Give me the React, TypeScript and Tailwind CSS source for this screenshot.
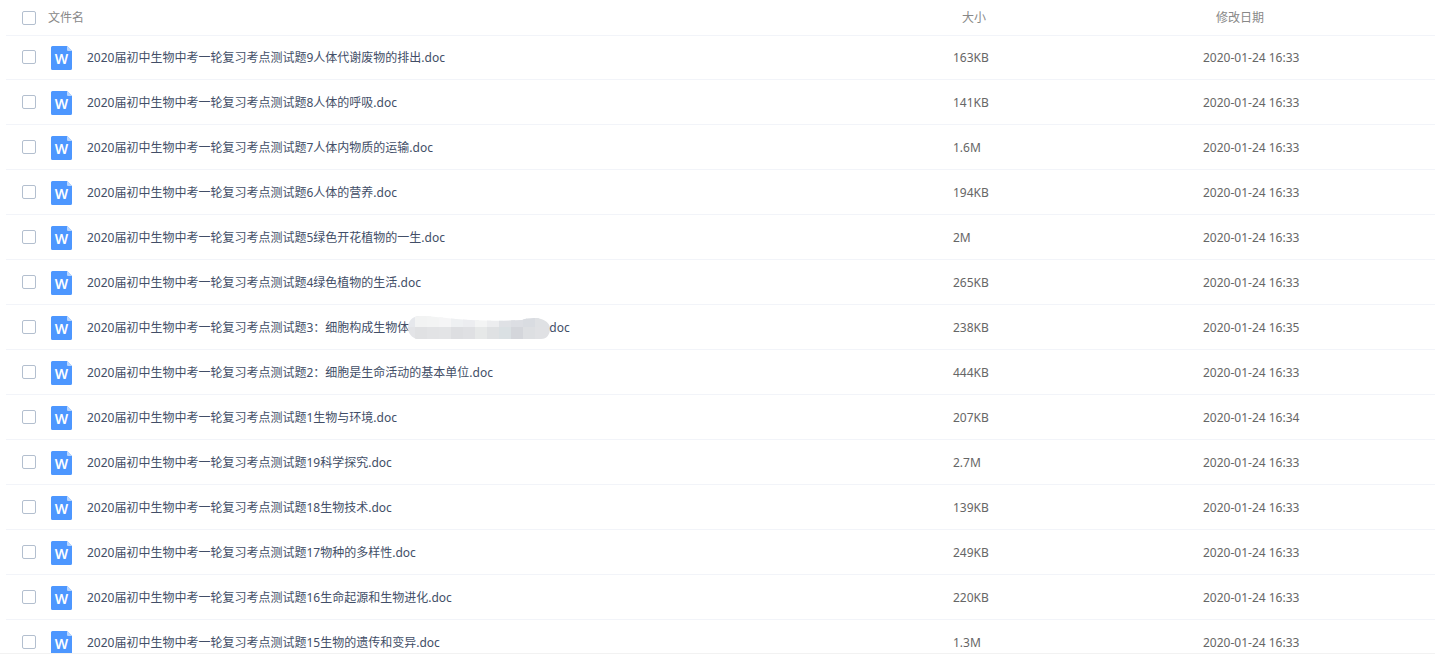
import { useState } from "react";

type FileRow = {
  name: string;
  size: string;
  date: string;
  masked?: boolean;
};

const files: FileRow[] = [
  { name: "2020届初中生物中考一轮复习考点测试题9人体代谢废物的排出.doc", size: "163KB", date: "2020-01-24 16:33" },
  { name: "2020届初中生物中考一轮复习考点测试题8人体的呼吸.doc", size: "141KB", date: "2020-01-24 16:33" },
  { name: "2020届初中生物中考一轮复习考点测试题7人体内物质的运输.doc", size: "1.6M", date: "2020-01-24 16:33" },
  { name: "2020届初中生物中考一轮复习考点测试题6人体的营养.doc", size: "194KB", date: "2020-01-24 16:33" },
  { name: "2020届初中生物中考一轮复习考点测试题5绿色开花植物的一生.doc", size: "2M", date: "2020-01-24 16:33" },
  { name: "2020届初中生物中考一轮复习考点测试题4绿色植物的生活.doc", size: "265KB", date: "2020-01-24 16:33" },
  { name: "2020届初中生物中考一轮复习考点测试题3：细胞构成生物体", size: "238KB", date: "2020-01-24 16:35", masked: true },
  { name: "2020届初中生物中考一轮复习考点测试题2：细胞是生命活动的基本单位.doc", size: "444KB", date: "2020-01-24 16:33" },
  { name: "2020届初中生物中考一轮复习考点测试题1生物与环境.doc", size: "207KB", date: "2020-01-24 16:34" },
  { name: "2020届初中生物中考一轮复习考点测试题19科学探究.doc", size: "2.7M", date: "2020-01-24 16:33" },
  { name: "2020届初中生物中考一轮复习考点测试题18生物技术.doc", size: "139KB", date: "2020-01-24 16:33" },
  { name: "2020届初中生物中考一轮复习考点测试题17物种的多样性.doc", size: "249KB", date: "2020-01-24 16:33" },
  { name: "2020届初中生物中考一轮复习考点测试题16生命起源和生物进化.doc", size: "220KB", date: "2020-01-24 16:33" },
  { name: "2020届初中生物中考一轮复习考点测试题15生物的遗传和变异.doc", size: "1.3M", date: "2020-01-24 16:33" },
];

const mosaicTop = ["#e6e8ec", "#f2f3f3", "#f3f4f4", "#f5f5f6", "#eef0f2", "#ecedf0", "#f3f4f4", "#ecedef", "#dfe1e5", "#dcdee3", "#d9dce1", "#dfe1e4"];
const mosaicBottom = ["#e3e4e7", "#e0e1e3", "#e2e3e5", "#e3e4e6", "#dddee1", "#dfe0e3", "#e6e8e8", "#dfe1e3", "#dae0e3", "#d4d6db", "#dddfe2", "#e0e1e4"];

function WordIcon() {
  return (
    <svg width="21" height="24" viewBox="0 0 21 24" className="shrink-0" aria-hidden="true">
      <path d="M1.5 0H16l5 5v17.5a1.5 1.5 0 0 1-1.5 1.5h-18A1.5 1.5 0 0 1 0 22.5v-21A1.5 1.5 0 0 1 1.5 0z" fill="#4d97ff" />
      <path d="M16 0l5 5h-4a1 1 0 0 1-1-1z" fill="#b8d6ff" />
      <text x="10.500" y="18" textAnchor="middle" className="fill-white font-['Noto_Sans',sans-serif] text-[14px] font-semibold">
        W
      </text>
    </svg>
  );
}

// Pixelated smudge over the hidden part of a file name
function Mosaic() {
  return (
    <svg width="142" height="24" viewBox="0 0 142 24" className="-mx-px shrink-0" aria-hidden="true">
      <defs>
        <clipPath id="smudge">
          <path d="M12 0C26 0 34 2 48 3c22 2 44 2 66 1 4-2 14-3 19-1 6 2 9 5 9 10s-3 10-9 10H9c-5-1-9-6-9-11C0 5 4 0 12 0z" />
        </clipPath>
      </defs>
      <g clipPath="url(#smudge)" shapeRendering="crispEdges">
        {mosaicTop.map((color, i) => (
          <rect key={i} x={i * 12 - 5} y="0" width="16" height="11" fill={color} />
        ))}
        {mosaicBottom.map((color, i) => (
          <rect key={i} x={i * 12 - 5} y="11" width="16" height="13" fill={color} />
        ))}
      </g>
    </svg>
  );
}

function Checkbox({ id, label, checked, onChange }: { id: string; label: string; checked: boolean; onChange: () => void }) {
  return (
    <input
      type="checkbox"
      id={id}
      aria-label={label}
      checked={checked}
      onChange={onChange}
      className="block size-3.5 cursor-pointer appearance-none rounded-xs border border-[#b3bfcf] bg-white checked:border-[#4d97ff] checked:bg-[#4d97ff]"
    />
  );
}

export default function App() {
  const [selected, setSelected] = useState<number[]>([]);
  const allSelected = selected.length === files.length;

  const toggle = (index: number) => {
    setSelected((prev) => (prev.includes(index) ? prev.filter((i) => i !== index) : [...prev, index]));
  };

  return (
    <div className="h-screen overflow-hidden border-b border-[#f2f2f2] bg-white pl-1.5 font-['Noto_Sans','Noto_Sans_CJK_SC',sans-serif] text-xs">
      <table className="w-full table-fixed border-separate border-spacing-0 text-left">
        <colgroup>
          <col className="w-[42px]" />
          <col />
          <col className="w-[250px]" />
          <col className="w-[232px]" />
        </colgroup>
        <thead className="text-[#888888] shadow-[0_1px_0_#f2f4f9]">
          <tr className="h-[35px]">
            <th className="p-0 pl-4 font-normal">
              <Checkbox
                id="select-all"
                label="全选"
                checked={allSelected}
                onChange={() => setSelected(allSelected ? [] : files.map((_, i) => i))}
              />
            </th>
            <th className="p-0 font-normal">文件名</th>
            <th className="p-0 pl-[9px] font-normal">大小</th>
            <th className="p-0 pl-[13px] font-normal">修改日期</th>
          </tr>
        </thead>
        <tbody>
          {files.map((file, i) => (
            <tr key={i} className="h-[45px] text-[#666666] hover:bg-[#f7faff] [&>td]:border-b [&>td]:border-[#f2f4f9]">
              <td className="p-0 pl-4">
                <Checkbox id={`file-${i}`} label={file.name} checked={selected.includes(i)} onChange={() => toggle(i)} />
              </td>
              <td className="p-0 pl-[3px]">
                <div className="flex items-center pt-px">
                  <WordIcon />
                  <label htmlFor={`file-${i}`} className="ml-[15px] flex items-center whitespace-nowrap text-[#424e67]">
                    {file.name}
                    {file.masked && (
                      <>
                        <Mosaic />
                        doc
                      </>
                    )}
                  </label>
                </div>
              </td>
              <td className="p-0 pt-0.5">{file.size}</td>
              <td className="p-0 pt-0.5">{file.date}</td>
            </tr>
          ))}
        </tbody>
      </table>
    </div>
  );
}
